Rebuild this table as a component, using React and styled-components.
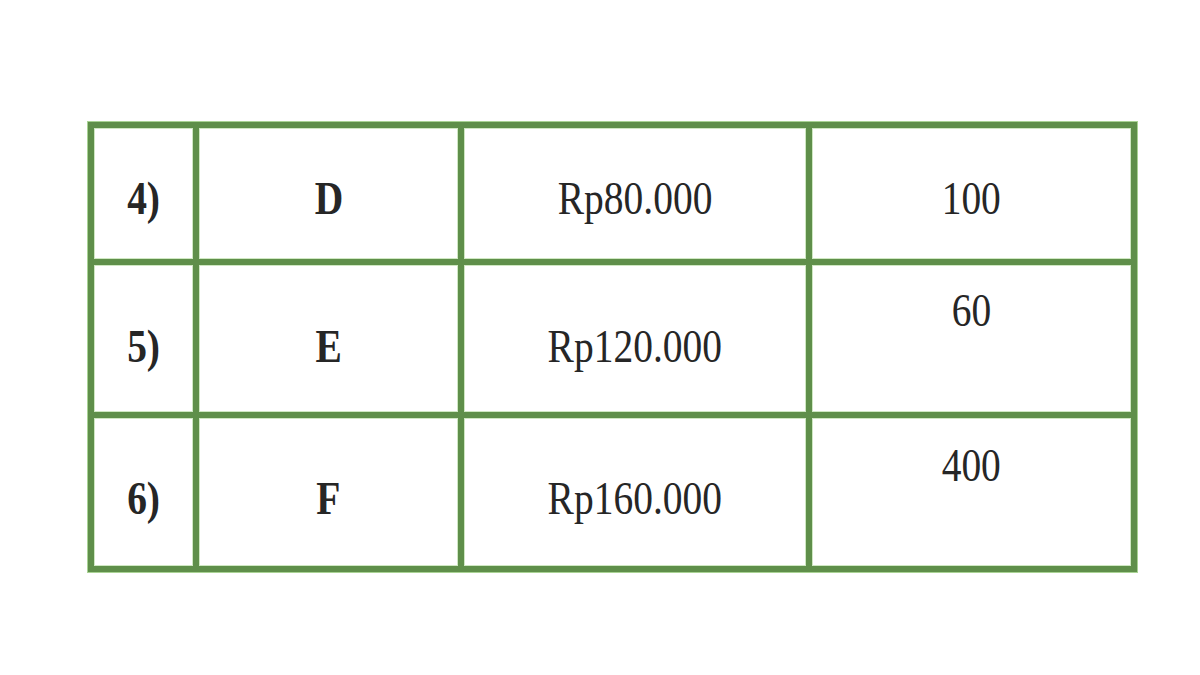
import React from 'react';
import styled, { createGlobalStyle } from 'styled-components';

const GlobalStyle = createGlobalStyle`
  html, body {
    margin: 0;
    padding: 0;
    background: #ffffff;
  }
  body {
    font-family: "Liberation Serif", "Times New Roman", serif;
    color: #262626;
  }
`;

const Page = styled.div`
  width: 1200px;
  height: 675px;
  padding: 122px 0 0 88px;
  box-sizing: border-box;
  background: #ffffff;
`;

const Table = styled.div`
  display: grid;
  grid-template-columns: 99px 259px 342px 319px;
  grid-template-rows: 131px 147px 148px;
  gap: 6px;
  padding: 6px;
  width: max-content;
  background: #5f8f4a;
  box-shadow: 0 0 0 1px #a9d394;
`;

const Cell = styled.div`
  display: flex;
  justify-content: center;
  align-items: flex-start;
  padding-top: ${({ $top }) => $top}px;
  box-sizing: border-box;
  background: #ffffff;
  box-shadow: inset 0 0 0 1px #cfe8c2;
`;

const Text = styled.span`
  display: inline-block;
  font-size: 47px;
  line-height: 1;
  font-weight: ${({ $bold }) => ($bold ? 700 : 400)};
  transform: scaleX(0.84);
  white-space: nowrap;
  color: #262626;
`;

const rows = [
  { no: '4)', code: 'D', price: 'Rp80.000', qty: '100', top: 47, qtyTop: 47 },
  { no: '5)', code: 'E', price: 'Rp120.000', qty: '60', top: 58, qtyTop: 22 },
  { no: '6)', code: 'F', price: 'Rp160.000', qty: '400', top: 57, qtyTop: 24 },
];

export default function App() {
  return (
    <>
      <GlobalStyle />
      <Page>
        <Table>
          {rows.map((r) => (
            <React.Fragment key={r.no}>
              <Cell $top={r.top}>
                <Text $bold>{r.no}</Text>
              </Cell>
              <Cell $top={r.top}>
                <Text $bold>{r.code}</Text>
              </Cell>
              <Cell $top={r.top}>
                <Text>{r.price}</Text>
              </Cell>
              <Cell $top={r.qtyTop}>
                <Text>{r.qty}</Text>
              </Cell>
            </React.Fragment>
          ))}
        </Table>
      </Page>
    </>
  );
}
